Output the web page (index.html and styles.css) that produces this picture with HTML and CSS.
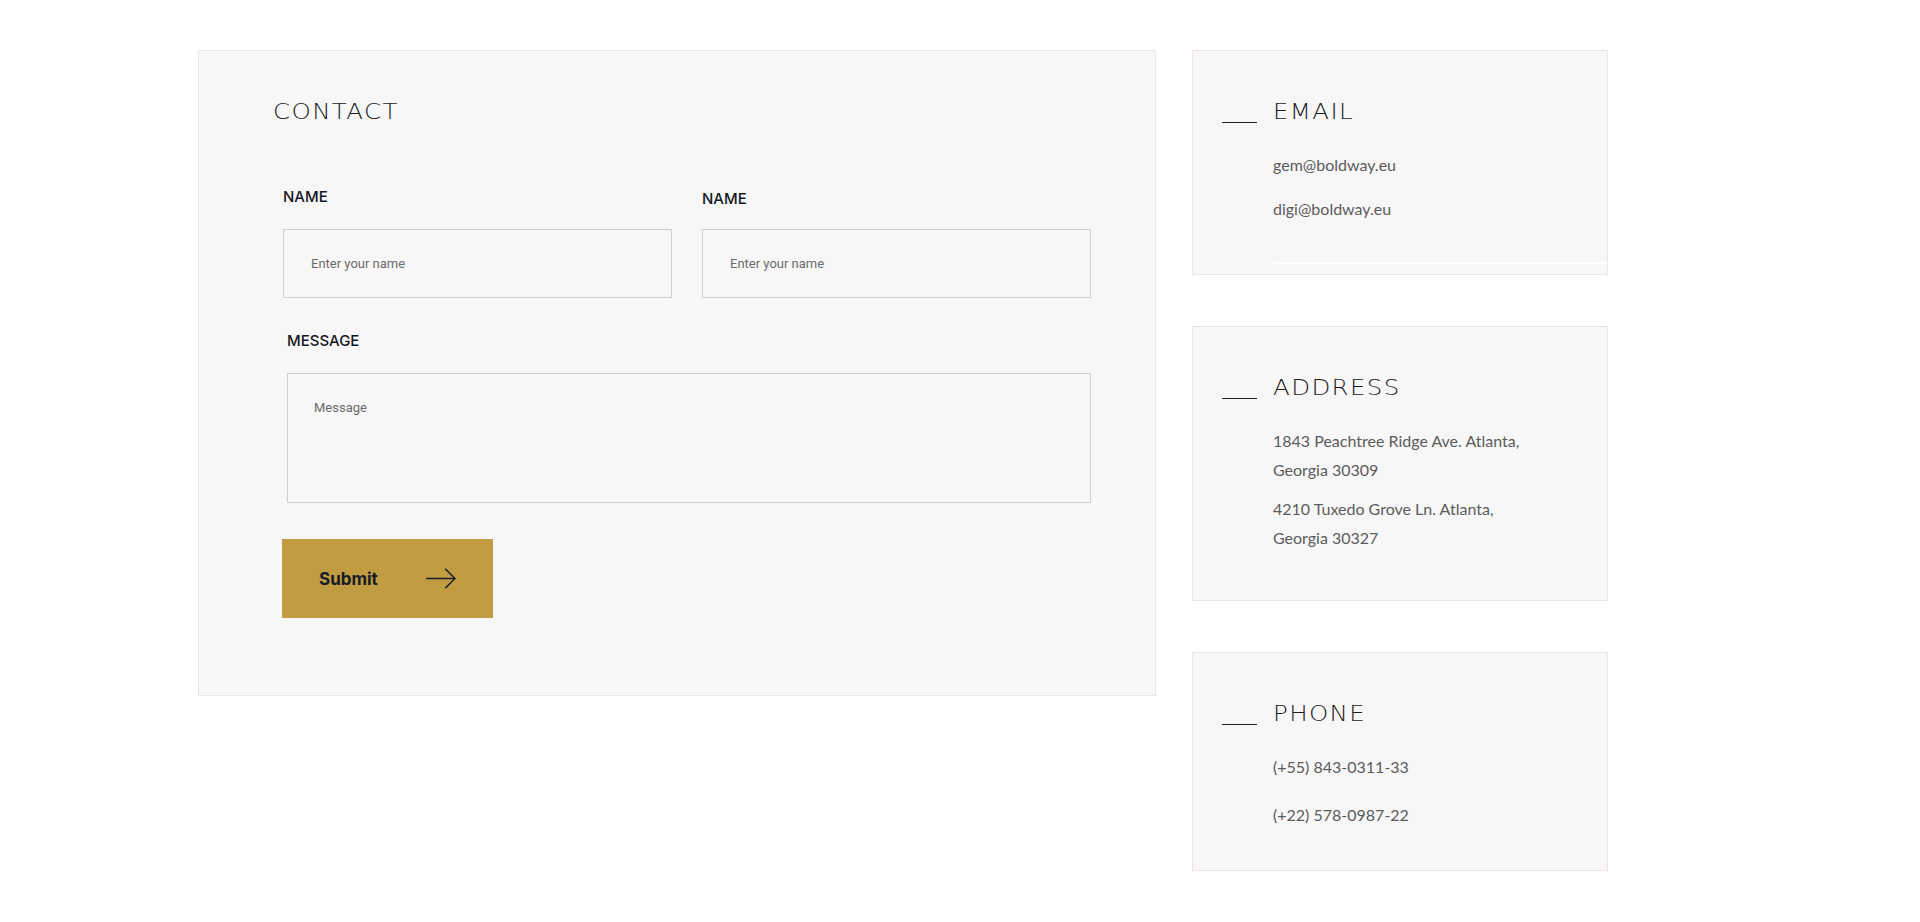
FILE: index.html
```html
<!DOCTYPE html>
<html lang="en">

<head>
  <meta charset="UTF-8">
  <meta name="viewport" content="width=device-width, initial-scale=1.0">
  <title>Contact</title>
  <link rel="stylesheet" href="styles.css">
</head>

<body>
  <section class="contact">
    <div class="contact-form-box">
      <h2 class="contact-title"><span class="wide-text">CONTACT</span></h2>
      <form class="contact-form" onsubmit="return false">
        <div class="field">
          <label class="field-label" for="first-name">NAME</label>
          <input class="field-input" id="first-name" type="text" placeholder="Enter your name">
        </div>
        <div class="field field--shift">
          <label class="field-label" for="last-name">NAME</label>
          <input class="field-input" id="last-name" type="text" placeholder="Enter your name">
        </div>
        <div class="field field--wide">
          <label class="field-label" for="message">MESSAGE</label>
          <textarea class="field-input field-textarea" id="message" placeholder="Message"></textarea>
        </div>
        <button class="submit-btn" type="submit">
          <span>Submit</span>
          <svg width="30" height="21" viewBox="0 0 30 21" fill="none" stroke="#161c28" stroke-width="1.5">
            <path d="M0 10.5H28.8" />
            <path d="M19.2 0.8L29 10.5L19.2 20.2" />
          </svg>
        </button>
      </form>
    </div>

    <aside class="contact-info">
      <div class="info-card info-card--email">
        <h3 class="info-title"><span class="info-dash"></span><span class="wide-text">EMAIL</span></h3>
        <ul class="info-list">
          <li>gem@boldway.eu</li>
          <li>digi@boldway.eu</li>
        </ul>
      </div>
      <div class="info-card info-card--address">
        <h3 class="info-title"><span class="info-dash"></span><span class="wide-text">ADDRESS</span></h3>
        <ul class="info-list">
          <li>1843 Peachtree Ridge Ave. Atlanta,<br>Georgia 30309</li>
          <li>4210 Tuxedo Grove Ln. Atlanta,<br>Georgia 30327</li>
        </ul>
      </div>
      <div class="info-card info-card--phone">
        <h3 class="info-title"><span class="info-dash"></span><span class="wide-text">PHONE</span></h3>
        <ul class="info-list">
          <li>(+55) 843-0311-33</li>
          <li>(+22) 578-0987-22</li>
        </ul>
      </div>
    </aside>
  </section>
</body>

</html>
```

FILE: styles.css
```css
body {
  margin: 0;
  padding: 0;
  background: #fff;
  font-family: Lato, "Noto Sans", sans-serif;
}

.contact {
  display: flex;
  align-items: flex-start;
  gap: 36px;
  padding: 50px 0 0 198px;
}

/* left: form panel */
.contact-form-box {
  width: 958px;
  height: 646px;
  box-sizing: border-box;
  background: #f7f7f7;
  border: 1px solid #f0e3e6;
  padding: 49px 64px 0 74px;
}

.contact-title,
.info-title {
  margin: 0;
  font-family: "DejaVu Sans", sans-serif;
  font-weight: 200;
  font-size: 21.5px;
  line-height: 24px;
  letter-spacing: 1.2px;
  color: #1c1c1c;
}

/* extended display face look */
.wide-text {
  display: inline-block;
  transform: scaleX(1.14);
  transform-origin: left center;
}

.contact-form {
  display: grid;
  grid-template-columns: 389px 389px;
  column-gap: 30px;
  align-items: start;
  margin: 63px 0 0 10px;
}

.field-label {
  display: block;
  margin-bottom: 22px;
  font-family: Inter, sans-serif;
  font-weight: 500;
  font-size: 15px;
  line-height: 20px;
  color: #14181f;
}

.field--shift .field-label {
  margin-top: 2px;
  margin-bottom: 20px;
}

.field-input {
  display: block;
  width: 389px;
  height: 69px;
  box-sizing: border-box;
  margin: 0;
  padding: 0 27px;
  background: transparent;
  border: 1px solid #cfcfcf;
  border-radius: 0;
  outline: none;
  font-family: Roboto, sans-serif;
  font-size: 13px;
  color: #333;
}

.field-input::placeholder {
  color: #6b6b6b;
}

.field--wide {
  grid-column: 1 / -1;
  margin: 33px 0 0 4px;
}

.field-textarea {
  width: 804px;
  height: 130px;
  padding: 26px 26px;
  resize: none;
}

.submit-btn {
  grid-column: 1;
  justify-self: start;
  display: flex;
  align-items: center;
  justify-content: space-between;
  width: 211px;
  height: 79px;
  margin: 36px 0 0 -1px;
  padding: 0 37px;
  border: none;
  background: #c29c42;
  cursor: pointer;
  font-family: Inter, sans-serif;
  font-weight: 700;
  font-size: 17px;
  color: #141a26;
}

/* right: info cards */
.contact-info {
  display: flex;
  flex-direction: column;
  gap: 51px;
  width: 416px;
}

.info-card {
  box-sizing: border-box;
  background: #f7f7f7;
  border: 1px solid #f0e3e6;
  padding: 49px 0 0 29px;
}

.info-card--email {
  height: 225px;
}

.info-card--address {
  height: 275px;
}

.info-card--phone {
  height: 219px;
}

.info-title {
  display: flex;
  align-items: flex-start;
}

.info-dash {
  width: 35px;
  height: 1px;
  margin: 22px 16px 0 0;
  background: #222;
}

.info-list {
  display: flex;
  flex-direction: column;
  gap: 15px;
  margin: 26px 0 0 51px;
  padding: 0;
  list-style: none;
  font-size: 16px;
  line-height: 29px;
  color: #5c5c5c;
}

.info-card--email .info-list {
  padding-bottom: 39px;
  border-bottom: 2px solid #fff;
}

.info-card--address .info-list {
  gap: 10px;
}

.info-card--phone .info-list {
  gap: 19px;
}
```
